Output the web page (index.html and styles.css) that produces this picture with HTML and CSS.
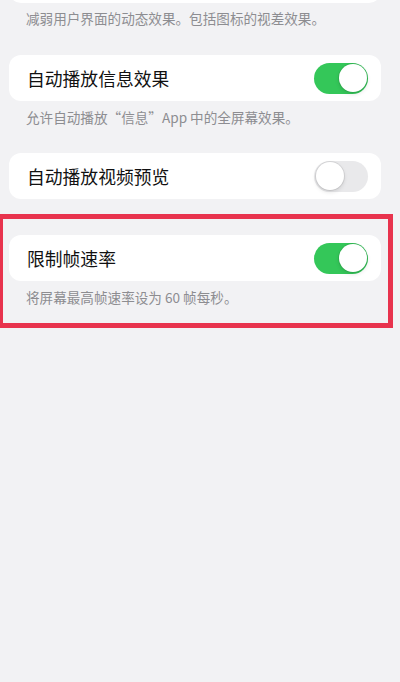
FILE: index.html
```html
<!DOCTYPE html>
<html lang="zh-CN">
<head>
<meta charset="utf-8">
<link rel="stylesheet" href="styles.css">
</head>
<body>
<div class="list">
  <div class="group first">
    <div class="card cut"></div>
    <div class="caption">减弱用户界面的动态效果。包括图标的视差效果。</div>
  </div>
  <div class="group">
    <div class="card">
      <span class="title">自动播放信息效果</span>
      <span class="toggle on"><span class="knob"></span></span>
    </div>
    <div class="caption">允许自动播放“信息”App 中的全屏幕效果。</div>
  </div>
  <div class="group">
    <div class="card">
      <span class="title">自动播放视频预览</span>
      <span class="toggle off"><span class="knob"></span></span>
    </div>
  </div>
  <div class="highlight">
    <div class="card">
      <span class="title">限制帧速率</span>
      <span class="toggle on"><span class="knob"></span></span>
    </div>
    <div class="caption">将屏幕最高帧速率设为 60 帧每秒。</div>
  </div>
</div>
</body>
</html>
```
FILE: styles.css
```css
html, body {
  margin: 0;
  padding: 0;
  background: #f2f2f4;
  font-family: "Noto Sans CJK SC", "Noto Sans", sans-serif;
}
body {
  width: 400px;
  height: 682px;
  overflow: hidden;
}
.list {
  padding: 0 19px 0 9px;
}
.group {
  margin-top: 29px;
}
.group.first {
  margin-top: 0;
}
.group + .group + .group {
  margin-top: 28px;
}
.card {
  background: #ffffff;
  border-radius: 12px;
  height: 46px;
  display: flex;
  align-items: center;
  justify-content: space-between;
  padding: 0 13px 0 18px;
}
.card.cut {
  margin-top: -43px;
}
.title {
  font-size: 17.8px;
  color: #111111;
}
.caption {
  font-size: 13.6px;
  line-height: 16px;
  color: #8d8d91;
  padding: 0 17px;
  margin-top: 8px;
  white-space: nowrap;
}
.group.first .caption {
  margin-top: 7px;
}
.toggle {
  width: 54px;
  height: 31px;
  border-radius: 16px;
  display: flex;
  align-items: center;
  box-sizing: border-box;
  padding: 0 1.5px;
}
.toggle.on {
  background: #34c759;
  justify-content: flex-end;
}
.toggle.off {
  background: #e9e9eb;
  justify-content: flex-start;
}
.knob {
  width: 28px;
  height: 28px;
  border-radius: 50%;
  background: #ffffff;
  box-shadow: 0 0 0 1px rgba(0,0,0,0.08), 0 2px 4px rgba(0,0,0,0.12);
}
.highlight {
  margin: 15px -12px 0 -9px;
  border: 5px solid #e8334d;
  border-left-width: 3px;
  padding: 16px 7px 18px 6px;
}
.highlight .caption {
  margin-top: 8px;
}
```
